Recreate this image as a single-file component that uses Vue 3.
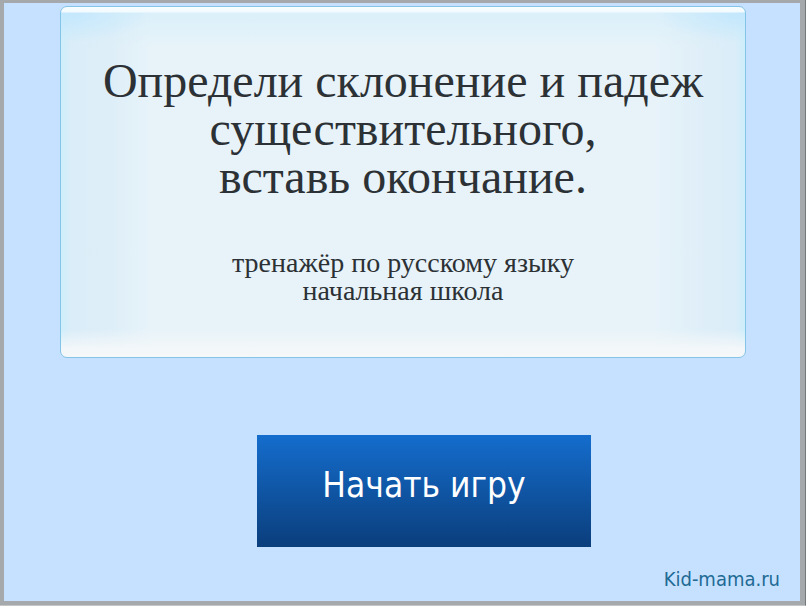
<script setup>
import { ref } from 'vue';

const titleLines = [
  'Определи склонение и падеж',
  'существительного,',
  'вставь окончание.'
];

const subtitleLines = [
  'тренажёр по русскому языку',
  'начальная школа'
];

const started = ref(false);

function startGame() {
  started.value = true;
}
</script>

<template>
  <div class="frame">
    <main class="screen">
      <section class="panel">
        <h1 class="title">
          <span v-for="line in titleLines" :key="line" class="line">{{ line }}</span>
        </h1>
        <p class="subtitle">
          <span v-for="line in subtitleLines" :key="line" class="line">{{ line }}</span>
        </p>
      </section>

      <div class="actions">
        <button type="button" class="start-button" :aria-pressed="started" @click="startGame">Начать игру</button>
      </div>

      <footer class="footer">
        <a class="site-link" href="https://kid-mama.ru">Kid-mama.ru</a>
      </footer>
    </main>
  </div>
</template>

<style>
body {
  margin: 0;
  background-color: #a5a9ab;
}
</style>

<style scoped>
.frame {
  box-sizing: border-box;
  display: flex;
  min-height: 100vh;
  padding: 3px 5px 4px 4px;
  background-color: #a5a9ab;
  border-right: 1px solid #747a7a;
  border-bottom: 1px solid #c4c6c6;
}

.screen {
  box-sizing: border-box;
  flex: 1;
  display: flex;
  flex-direction: column;
  padding: 3px 54px 8px 56px;
  background-color: #c6e1ff;
}

.panel {
  box-sizing: border-box;
  min-height: 352px;
  padding: 50px 24px;
  border: 1px solid #84c4e6;
  border-radius: 7px;
  text-align: center;
  color: #2c3135;
  font-family: "Liberation Serif", "Times New Roman", serif;
  background:
    linear-gradient(to bottom, #f7fdff 0, #f2fbff 5px, transparent 6px),
    linear-gradient(to top, #f5f7f8 0, #f3f7f9 8px, rgba(243, 247, 249, 0) 28px),
    radial-gradient(ellipse 90px 30px at 0 6px, #c2e7fd, rgba(194, 231, 253, 0)),
    radial-gradient(ellipse 90px 30px at 100% 6px, #c2e7fd, rgba(194, 231, 253, 0)),
    linear-gradient(to bottom, rgba(216, 239, 250, 0.8) 6px, rgba(230, 243, 249, 0) 40px),
    linear-gradient(to right, #cdeefb 0, #daedf8 10px, #deeef8 50px, #e7f3f9 90px, #e7f3f9 calc(100% - 90px), #deeef8 calc(100% - 40px), #daedf8 calc(100% - 10px), #cdeefb 100%);
}

.line {
  display: block;
}

.title {
  margin: 0;
  font-size: 48px;
  font-weight: 400;
  line-height: 48px;
}

.subtitle {
  margin: 48px 0 0;
  font-size: 28px;
  line-height: 28px;
}

.actions {
  display: flex;
  justify-content: center;
  padding: 77px 0 0 42px;
}

.start-button {
  width: 334px;
  height: 112px;
  padding: 0 0 12px;
  border: none;
  background: linear-gradient(to bottom, #146dcd, #0b3e7c);
  color: #fff;
  font-family: "DejaVu Sans Condensed", Tahoma, "Noto Sans", sans-serif;
  font-size: 35px;
  cursor: pointer;
}

.start-button:hover {
  background: linear-gradient(to bottom, #1b78dc, #0e4a92);
}

.footer {
  display: flex;
  justify-content: flex-end;
  margin: auto -34px 0 0;
}

.site-link {
  color: #216a94;
  font-family: "DejaVu Sans Condensed", Tahoma, "Noto Sans", sans-serif;
  font-size: 20px;
  line-height: 28px;
  text-decoration: none;
}
</style>
